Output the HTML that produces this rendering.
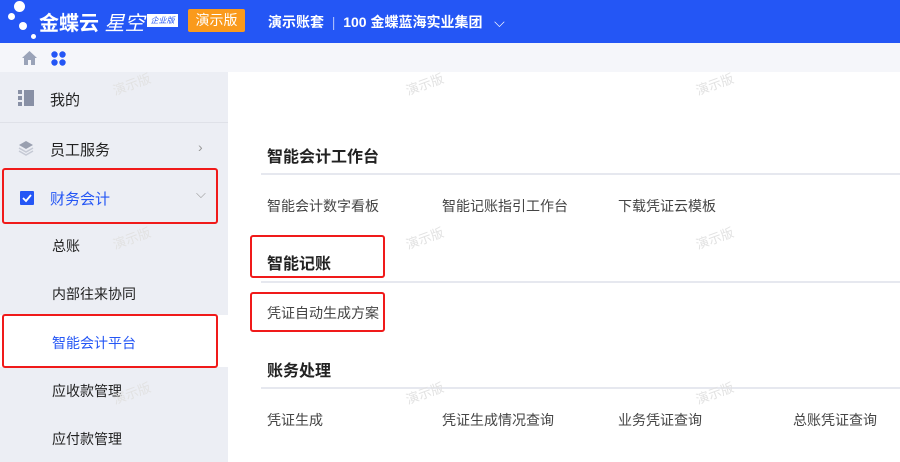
<!DOCTYPE html><html><head><meta charset="utf-8"><style>
*{margin:0;padding:0;box-sizing:border-box}
body{width:900px;height:462px;overflow:hidden;position:relative;background:#fff;font-family:"Liberation Sans","Noto Sans CJK SC",sans-serif;color:#222}
.a{position:absolute}
.hd{left:0;top:0;width:900px;height:43px;background:#2456f5;color:#fff}
.sub{left:0;top:43px;width:900px;height:29px;background:#f5f6fa}
.side{left:0;top:72px;width:228px;height:390px;background:#eceef4}
.it{position:absolute;left:50px;font-size:15px;color:#222}
.si{position:absolute;left:52px;font-size:14px;color:#222}
.red{position:absolute;border:2.5px solid #f01a1a;border-radius:3px}
.h{position:absolute;left:267px;font-size:16px;font-weight:bold;color:#222}
.ln{position:absolute;left:261px;width:639px;height:2px;background:#e6e8ef}
.l{position:absolute;font-size:14px;color:#444}
.wm{position:absolute;font-size:13px;color:#e2e2e2;transform:rotate(-20deg)}
</style></head><body>
<div class="a hd">
 <div class="a" style="left:14px;top:1px;width:11px;height:11px;border-radius:50%;background:#fff"></div>
 <div class="a" style="left:8px;top:13px;width:7px;height:7px;border-radius:50%;background:#fff"></div>
 <div class="a" style="left:19px;top:22px;width:8px;height:8px;border-radius:50%;background:#fff"></div>
 <div class="a" style="left:31px;top:34px;width:5px;height:5px;border-radius:50%;background:#fff"></div>
 <div class="a" style="left:39px;top:7px;font-size:20px;font-weight:bold">金蝶云<span style="font-weight:normal;font-style:italic"> 星空</span></div>
 <div class="a" style="left:147px;top:14px;width:31px;height:13px;background:#fff;color:#2456f5;font-size:8px;line-height:13px;text-align:center;font-style:italic">企业版</div>
 <div class="a" style="left:188px;top:9px;width:57px;height:23px;background:#fa9a1c;border-radius:2px;font-size:14px;line-height:23px;text-align:center">演示版</div>
 <div class="a" style="left:268px;top:12px;font-size:14px;font-weight:bold">演示账套 <span style="opacity:.6;font-weight:normal">&nbsp;|&nbsp;</span> 100 金蝶蓝海实业集团 <span style="font-weight:normal">&nbsp;&nbsp;⌵</span></div>
</div>
<div class="a sub">
 <svg class="a" style="left:22px;top:8px" width="15" height="14" viewBox="0 0 15 14"><path d="M7.5 0L0 7h2v7h4V9h3v5h4V7h2z" fill="#9aa3b8"/></svg>
 <svg class="a" style="left:51px;top:8px" width="15" height="15" viewBox="0 0 15 15" fill="#2456f5"><circle cx="3.5" cy="3.5" r="3.2"/><circle cx="11.5" cy="3.5" r="3.2"/><circle cx="3.5" cy="11.5" r="3.2"/><circle cx="11.5" cy="11.5" r="3.2"/></svg>
</div>
<div class="a side">
 <div class="a" style="left:0;top:50px;width:228px;height:1px;background:#dfe1e8"></div>
 <div class="a" style="left:0;top:243px;width:228px;height:52px;background:#fff"></div>
</div>
<svg class="a" style="left:18px;top:90px" width="16" height="16" viewBox="0 0 16 16" fill="#8890a5"><rect x="0" y="0" width="4" height="4"/><rect x="0" y="6" width="4" height="4"/><rect x="0" y="12" width="4" height="4"/><rect x="6" y="0" width="10" height="16"/></svg>
<div class="it" style="top:89px">我的</div>
<svg class="a" style="left:18px;top:140px" width="16" height="16" viewBox="0 0 16 16"><path d="M8 1L15 5 8 9 1 5z" fill="#9aa0b0"/><path d="M1 8l7 4 7-4M1 11l7 4 7-4" stroke="#c5c9d4" fill="none" stroke-width="1.5"/></svg>
<div class="it" style="top:139px">员工服务</div>
<div class="a" style="left:198px;top:139px;color:#999;font-size:14px">›</div>
<svg class="a" style="left:20px;top:190px" width="14" height="15" viewBox="0 0 14 15"><rect x="0" y="1" width="14" height="14" rx="1" fill="#2456f5"/><path d="M3 8l3 3 5-6" stroke="#fff" stroke-width="1.8" fill="none"/></svg>
<div class="it" style="top:188px;color:#2456f5">财务会计</div>
<div class="a" style="left:196px;top:186px;color:#999;font-size:13px">⌵</div>
<div class="si" style="top:236px">总账</div>
<div class="si" style="top:284px">内部往来协同</div>
<div class="si" style="top:333px;color:#2456f5">智能会计平台</div>
<div class="si" style="top:381px">应收款管理</div>
<div class="si" style="top:429px">应付款管理</div>
<div class="red" style="left:2px;top:168px;width:216px;height:56px"></div>
<div class="red" style="left:2px;top:314px;width:216px;height:54px"></div>

<div class="h" style="top:143px">智能会计工作台</div>
<div class="ln" style="top:173px"></div>
<div class="l" style="left:267px;top:196px">智能会计数字看板</div>
<div class="l" style="left:442px;top:196px">智能记账指引工作台</div>
<div class="l" style="left:618px;top:196px">下载凭证云模板</div>
<div class="h" style="top:250px">智能记账</div>
<div class="ln" style="top:281px"></div>
<div class="l" style="left:267px;top:303px">凭证自动生成方案</div>
<div class="h" style="top:357px">账务处理</div>
<div class="ln" style="top:387px"></div>
<div class="l" style="left:267px;top:410px">凭证生成</div>
<div class="l" style="left:442px;top:410px">凭证生成情况查询</div>
<div class="l" style="left:618px;top:410px">业务凭证查询</div>
<div class="l" style="left:793px;top:410px">总账凭证查询</div>
<div class="red" style="left:250px;top:235px;width:135px;height:43px"></div>
<div class="red" style="left:250px;top:292px;width:135px;height:40px"></div>

<div class="wm" style="left:112px;top:74px">演示版</div>
<div class="wm" style="left:405px;top:74px">演示版</div>
<div class="wm" style="left:695px;top:74px">演示版</div>
<div class="wm" style="left:112px;top:228px">演示版</div>
<div class="wm" style="left:405px;top:228px">演示版</div>
<div class="wm" style="left:695px;top:228px">演示版</div>
<div class="wm" style="left:112px;top:383px">演示版</div>
<div class="wm" style="left:405px;top:383px">演示版</div>
<div class="wm" style="left:695px;top:383px">演示版</div>
</body></html>
